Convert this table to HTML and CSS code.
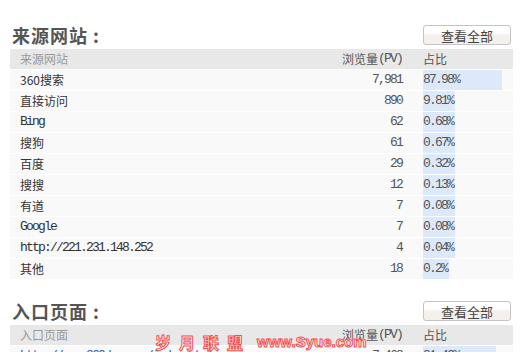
FILE: index.html
```html
<!DOCTYPE html>
<html lang="zh-CN">
<head>
<meta charset="utf-8">
<title>来源网站</title>
<link rel="stylesheet" href="styles.css">
</head>
<body>
<div class="page">
  <section class="panel">
    <div class="panel-head">
      <h2 class="panel-title">来源网站<span class="colon">:</span></h2>
      <button class="btn" type="button">查看全部</button>
    </div>
    <table class="stats">
      <thead>
        <tr><th class="c-name">来源网站</th><th class="c-pv">浏览量<span class="en">(PV)</span></th><th class="c-pct">占比</th></tr>
      </thead>
      <tbody>
        <tr><td class="c-name">360搜索</td><td class="c-pv en">7,981</td><td class="c-pct"><span class="bar en" style="min-width:87.98%">87.98%</span></td></tr>
        <tr><td class="c-name">直接访问</td><td class="c-pv en">890</td><td class="c-pct"><span class="bar en" style="min-width:9.81%">9.81%</span></td></tr>
        <tr><td class="c-name en">Bing</td><td class="c-pv en">62</td><td class="c-pct"><span class="bar en" style="min-width:0.68%">0.68%</span></td></tr>
        <tr><td class="c-name">搜狗</td><td class="c-pv en">61</td><td class="c-pct"><span class="bar en" style="min-width:0.67%">0.67%</span></td></tr>
        <tr><td class="c-name">百度</td><td class="c-pv en">29</td><td class="c-pct"><span class="bar en" style="min-width:0.32%">0.32%</span></td></tr>
        <tr><td class="c-name">搜搜</td><td class="c-pv en">12</td><td class="c-pct"><span class="bar en" style="min-width:0.13%">0.13%</span></td></tr>
        <tr><td class="c-name">有道</td><td class="c-pv en">7</td><td class="c-pct"><span class="bar en" style="min-width:0.08%">0.08%</span></td></tr>
        <tr><td class="c-name en">Google</td><td class="c-pv en">7</td><td class="c-pct"><span class="bar en" style="min-width:0.08%">0.08%</span></td></tr>
        <tr><td class="c-name en">http://221.231.148.252</td><td class="c-pv en">4</td><td class="c-pct"><span class="bar en" style="min-width:0.04%">0.04%</span></td></tr>
        <tr><td class="c-name">其他</td><td class="c-pv en">18</td><td class="c-pct"><span class="bar en" style="min-width:0.2%">0.2%</span></td></tr>
      </tbody>
    </table>
  </section>

  <section class="panel">
    <div class="panel-head">
      <h2 class="panel-title">入口页面<span class="colon">:</span></h2>
      <button class="btn" type="button">查看全部</button>
    </div>
    <table class="stats">
      <thead>
        <tr><th class="c-name">入口页面</th><th class="c-pv">浏览量<span class="en">(PV)</span></th><th class="c-pct">占比</th></tr>
      </thead>
      <tbody>
        <tr><td class="c-name en"><a class="link" href="#">http://www.360doc.com/index.html</a></td><td class="c-pv en">7,468</td><td class="c-pct"><span class="bar en" style="min-width:81.40%">81.40%</span></td></tr>
      </tbody>
    </table>
  </section>

  <div class="watermark">
    <span class="wm-cn">岁月联盟</span>
    <span class="wm-en">www.Syue.com</span>
  </div>
</div>
</body>
</html>
```

FILE: styles.css
```css
* { box-sizing: border-box; }

html, body {
  margin: 0;
  padding: 0;
  background: #fff;
  overflow: hidden;
}

body {
  font-family: "Noto Sans CJK SC", "Liberation Sans", sans-serif;
  font-size: 12px;
  color: #333;
}

.page {
  position: relative;
  height: 352px;
  overflow: hidden;
  padding: 25px 10px 0;
}

.panel {
  margin-bottom: 21px;
}

.panel-head {
  display: flex;
  justify-content: space-between;
  align-items: flex-start;
  height: 24px;
}

.panel-title {
  margin: 0 0 0 2px;
  font-size: 18px;
  line-height: 20px;
  font-weight: bold;
  letter-spacing: 1px;
  color: #555;
}

.colon {
  margin-left: 5px;
}

.btn {
  width: 88px;
  height: 20px;
  margin: 0 2px 0 0;
  padding: 0;
  border: 1px solid #c4c4c4;
  border-radius: 3px;
  background: linear-gradient(#fff 0%, #fff 40%, #f4f0eb 50%, #f4f0eb 100%);
  font-family: "Noto Sans CJK SC", sans-serif;
  font-size: 13px;
  line-height: 17px;
  color: #444;
  cursor: pointer;
}

.stats {
  width: 503px;
  border-collapse: separate;
  border-spacing: 0;
  table-layout: fixed;
}

.stats th,
.stats td {
  height: 21px;
  padding: 0;
  line-height: 20px;
  border-bottom: 1px solid #fff;
  white-space: nowrap;
  overflow: hidden;
  vertical-align: top;
}

.stats th {
  background: #e8e8e8;
  color: #9a9a9a;
  font-weight: normal;
  text-align: left;
}

.stats td {
  background: #f9f9f9;
  color: #333;
}

.stats .c-name {
  padding-left: 10px;
}

.stats .c-pv {
  width: 100px;
  padding-right: 21px;
  text-align: right;
  color: #555;
}

.stats .c-pct {
  width: 90px;
  color: #555;
}

.en {
  font-family: "Liberation Mono", monospace;
  font-size: 13px;
  line-height: 20px;
  letter-spacing: -1.8px;
}

th .en {
  vertical-align: top;
}

.bar {
  display: block;
  width: fit-content;
  height: 20px;
  background: #dce9fb;
  padding-right: 2px;
}

.link {
  color: #1f5fb0;
  text-decoration: none;
}

.watermark {
  position: absolute;
  left: 155px;
  top: 332px;
  display: flex;
  align-items: flex-start;
  pointer-events: none;
}

.wm-cn {
  font-family: "Noto Sans CJK SC", sans-serif;
  font-size: 16px;
  line-height: 20px;
  font-weight: bold;
  letter-spacing: 8px;
  color: #fff;
  -webkit-text-stroke: 1px #f05050;
}

.wm-en {
  margin-left: 6px;
  margin-top: 1px;
  font-family: "Liberation Sans", sans-serif;
  font-size: 15px;
  line-height: 18px;
  font-weight: bold;
  color: #fff;
  -webkit-text-stroke: 1px #f05050;
}
```
